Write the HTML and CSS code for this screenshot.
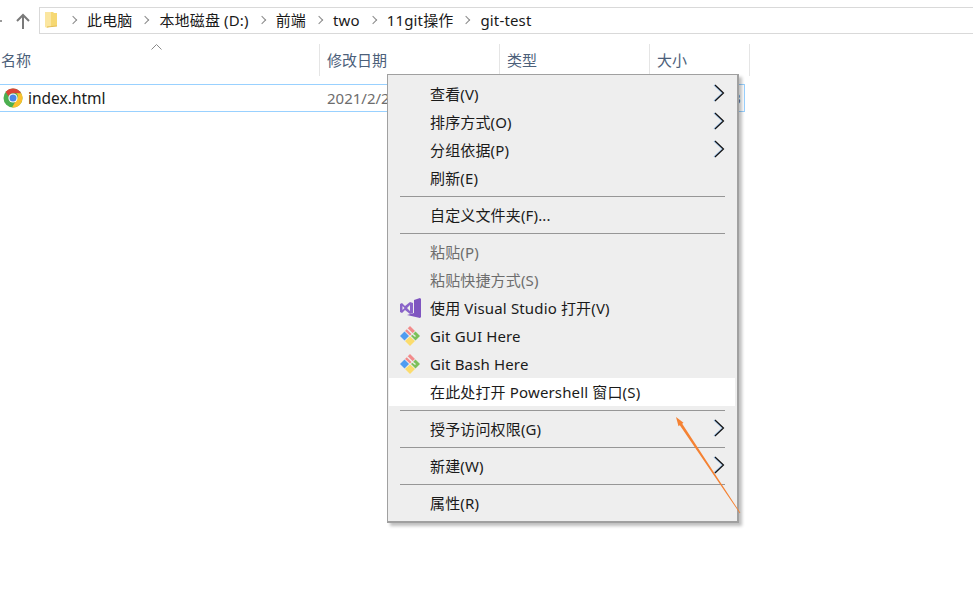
FILE: index.html
```html
<!DOCTYPE html>
<html lang="zh-CN">
<head>
  <meta charset="UTF-8" />
  <title>git-test</title>
  <link rel="stylesheet" href="styles.css">
</head>
<body>

  <div class="toolbar">
    <span class="forward-tip"></span>
    <svg class="up-arrow" width="14" height="16" viewBox="0 0 14 16"><path d="M7 16V2M1 8l6-6 6 6" fill="none" stroke="#7a7a7a" stroke-width="2"/></svg>
    <div class="address">
      <svg class="folder" width="13" height="17" viewBox="0 0 13 17">
        <path d="M0 1h6v14l-4 2-2-1z" fill="#fbe6a0"/>
        <path d="M6 1h2l1 1h3v13H6z" fill="#f6d873"/>
        <path d="M2 15.500l10-1v1l-10 1z" fill="#e3bc52"/>
      </svg>
      <span class="crumb">此电脑</span>
      <span class="crumb">本地磁盘 (D:)</span>
      <span class="crumb">前端</span>
      <span class="crumb">two</span>
      <span class="crumb">11git操作</span>
      <span class="crumb">git-test</span>
    </div>
  </div>

  <div class="columns">
    <div class="col col-name">
      名称
      <svg class="sort" width="11" height="6" viewBox="0 0 11 6"><path d="M.5 5.500l5-5 5 5" fill="none" stroke="#8a8a8a"/></svg>
    </div>
    <div class="col col-date">修改日期</div>
    <div class="col col-type">类型</div>
    <div class="col col-size">大小</div>
  </div>

  <div class="file-row">
    <svg class="chrome" width="20" height="20" viewBox="0 0 20 20">
      <circle cx="10" cy="10" r="9.500" fill="#4caf50"/>
      <path d="M10 .5a9.500 9.500 0 0 1 8.200 4.800H10a4.700 4.700 0 0 0-4.400 3L2.700 3.900A9.500 9.500 0 0 1 10 .5z" fill="#db4437"/>
      <path d="M18.200 5.300A9.500 9.500 0 0 1 9 19.500l4-6.900a4.700 4.700 0 0 0 .4-7.300z" fill="#fbc02d"/>
      <circle cx="10" cy="10" r="4.600" fill="#fff"/>
      <circle cx="10" cy="10" r="3.500" fill="#4a86e8"/>
    </svg>
    <span class="file-name">index.html</span>
    <span class="file-date">2021/2/2</span>
    <span class="file-size">1 KB</span>
  </div>

  <!-- 右键菜单 -->
  <div class="menu">
    <div class="item">查看(V)<svg class="chev" width="11" height="18" viewBox="0 0 11 18"><path d="M1 1l8.500 8-8.500 8" fill="none" stroke="#111" stroke-width="1.200"/></svg></div>
    <div class="item">排序方式(O)<svg class="chev" width="11" height="18" viewBox="0 0 11 18"><path d="M1 1l8.500 8-8.500 8" fill="none" stroke="#111" stroke-width="1.200"/></svg></div>
    <div class="item">分组依据(P)<svg class="chev" width="11" height="18" viewBox="0 0 11 18"><path d="M1 1l8.500 8-8.500 8" fill="none" stroke="#111" stroke-width="1.200"/></svg></div>
    <div class="item">刷新(E)</div>
    <div class="sep"></div>
    <div class="item">自定义文件夹(F)...</div>
    <div class="sep"></div>
    <div class="item disabled">粘贴(P)</div>
    <div class="item disabled">粘贴快捷方式(S)</div>
    <div class="item">
      <svg class="item-icon" width="21" height="20" viewBox="0 0 21 20">
        <path d="M0 6l2-1 3 3 5-4 3 1v10l-3 1-5-4-3 3-2-1zM2.500 8v4L4.500 10zM10 7l-3 3 3 3z" fill="#8a63c9" fill-rule="evenodd"/>
        <path d="M14 2l6-2 1 1v18l-1 1-13-3 7-2z" fill="#7f55c0"/>
      </svg>
      使用 Visual Studio 打开(V)
    </div>
    <div class="item">
      <svg class="item-icon" width="20" height="20" viewBox="0 0 20 20">
        <path d="M10 0l5 5-5 4.500L5 5z" fill="#f28b8b"/>
        <path d="M15.500 5.500L20 10l-4.500 4.500L11 10z" fill="#7cc05a"/>
        <path d="M10 10.500l5 4.500-5 5-5-5z" fill="#fbdc6e"/>
        <path d="M4.500 5.500L9 10l-4.500 4.500L0 10z" fill="#4f9cf0"/>
        <path d="M7 2.500l6 6M13 8.500l2.500 2" stroke="#ececec" stroke-width="1.500" fill="none"/>
      </svg>
      Git GUI Here
    </div>
    <div class="item">
      <svg class="item-icon" width="20" height="20" viewBox="0 0 20 20">
        <path d="M10 0l5 5-5 4.500L5 5z" fill="#f28b8b"/>
        <path d="M15.500 5.500L20 10l-4.500 4.500L11 10z" fill="#7cc05a"/>
        <path d="M10 10.500l5 4.500-5 5-5-5z" fill="#fbdc6e"/>
        <path d="M4.500 5.500L9 10l-4.500 4.500L0 10z" fill="#4f9cf0"/>
        <path d="M7 2.500l6 6M13 8.500l2.500 2" stroke="#ececec" stroke-width="1.500" fill="none"/>
      </svg>
      Git Bash Here
    </div>
    <div class="item active">在此处打开 Powershell 窗口(S)</div>
    <div class="sep"></div>
    <div class="item">授予访问权限(G)<svg class="chev" width="11" height="18" viewBox="0 0 11 18"><path d="M1 1l8.500 8-8.500 8" fill="none" stroke="#111" stroke-width="1.200"/></svg></div>
    <div class="sep"></div>
    <div class="item">新建(W)<svg class="chev" width="11" height="18" viewBox="0 0 11 18"><path d="M1 1l8.500 8-8.500 8" fill="none" stroke="#111" stroke-width="1.200"/></svg></div>
    <div class="sep"></div>
    <div class="item">属性(R)</div>
  </div>

  <!-- 标注箭头 -->
  <svg class="callout" width="70" height="110" viewBox="0 0 70 110">
    <path d="M1 3L8.500 8.800 7.200 9.700 65.300 98.800 64.700 99.200 4.800 11.300 3.500 12.200z" fill="#f58233"/>
  </svg>

</body>
</html>
```

FILE: styles.css
```css
html, body {
  height: 100%;
}
body {
  margin: 0;
  overflow: hidden;
  background: #fff;
  color: #1a1a1a;
  font-family: "Noto Sans", "Noto Sans CJK SC", sans-serif;
  font-size: 15px;
  letter-spacing: 0.15px;
}
.toolbar {
  display: flex;
  align-items: center;
  height: 27px;
  margin-top: 7px;
}
.forward-tip {
  flex: none;
  width: 2px;
  height: 2px;
  background: #9a9a9a;
}
.up-arrow {
  flex: none;
  margin-left: 14px;
  margin-right: 9px;
}
.address {
  flex: 1;
  display: flex;
  align-items: center;
  height: 27px;
  box-sizing: border-box;
  border: 1px solid #d9d9d9;
  border-right: none;
  padding-left: 5px;
  padding-bottom: 2px;
}
.folder {
  flex: none;
  margin-right: 2px;
}
.crumb {
  display: flex;
  align-items: center;
  white-space: nowrap;
}
.crumb::before {
  content: "";
  width: 5px;
  height: 5px;
  margin: 0 11px 0 10px;
  border-top: 1.5px solid #8a8a8a;
  border-right: 1.5px solid #8a8a8a;
  transform: rotate(45deg);
}
.columns {
  display: flex;
  height: 32px;
  margin-top: 10px;
  color: #4c607a;
  letter-spacing: 0;
}
.col {
  display: flex;
  align-items: center;
  box-sizing: border-box;
  border-right: 1px solid #e5e5e5;
  padding-left: 7px;
  padding-bottom: 2px;
}
.col-name {
  position: relative;
  width: 320px;
  padding-left: 1px;
}
.sort {
  position: absolute;
  left: 151px;
  top: 0;
}
.col-date {
  width: 180px;
}
.col-type {
  width: 150px;
}
.col-size {
  width: 100px;
}
.file-row {
  display: flex;
  align-items: center;
  width: 745px;
  height: 28px;
  margin-top: 8px;
  box-sizing: border-box;
  border: 1px solid #99d1ff;
  border-left: none;
}
.chrome {
  flex: none;
  margin-left: 3px;
  margin-right: 5px;
}
.file-name {
  width: 299px;
  font-size: 15.5px;
  letter-spacing: 0;
}
.file-date {
  color: #6d6d6d;
  letter-spacing: 0;
}
.file-size {
  margin-left: auto;
  margin-right: 3px;
  color: #6d6d6d;
}
.menu {
  position: absolute;
  left: 387px;
  top: 74px;
  width: 352px;
  box-sizing: border-box;
  padding: 5px 2px 4px 1px;
  background: #eeeeee;
  border: 2px solid #a0a0a0;
  border-width: 1px 2px 2px 1px;
  box-shadow: 3px 3px 3px rgba(0, 0, 0, 0.25);
}
.item {
  position: relative;
  display: flex;
  align-items: center;
  height: 28px;
  padding-left: 41px;
  line-height: 28px;
  color: #1a1a1a;
}
.item.disabled {
  color: #6d6d6d;
}
.item.active {
  background: #fff;
}
.item-icon {
  position: absolute;
  left: 11px;
  top: 4px;
}
.chev {
  position: absolute;
  right: 10px;
  top: 4px;
  filter: drop-shadow(-1px 0 0 rgba(30, 120, 220, 0.4));
}
.sep {
  height: 1px;
  margin: 4px 10px 4px 11px;
  background: #969696;
}
.callout {
  position: absolute;
  left: 675px;
  top: 414px;
}
```
